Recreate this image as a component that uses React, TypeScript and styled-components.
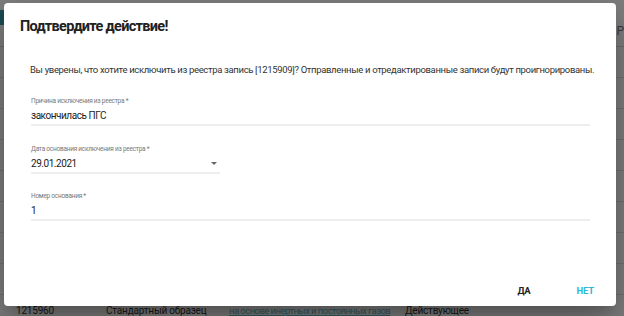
import styled, { createGlobalStyle } from 'styled-components';

const GlobalStyle = createGlobalStyle`
  html, body {
    margin: 0;
    padding: 0;
    width: 624px;
    height: 316px;
    overflow: hidden;
    font-family: 'Roboto', 'Liberation Sans', sans-serif;
    background: #ffffff;
  }
`;

const Page = styled.div`
  position: relative;
  width: 624px;
  height: 316px;
  overflow: hidden;
  background: #ffffff;
`;

const Header = styled.div`
  display: flex;
  justify-content: space-between;
  align-items: flex-start;
  height: 47px;
  box-sizing: border-box;
  padding-top: 10px;
  border-bottom: 1px solid #d8d8d8;
`;

const TealTab = styled.div`
  width: 60px;
  height: 15px;
  background: #3a9aa8;
`;

const HeaderText = styled.span`
  margin-top: 14px;
  font-size: 12px;
  color: #777;
`;

const Row = styled.div`
  display: grid;
  grid-template-columns: 90px 123px 176px 1fr;
  align-items: center;
  height: 30px;
  padding-left: 16px;
  border-bottom: 1px solid #e4e4e4;
  font-size: 10px;
  letter-spacing: -0.2px;
  white-space: nowrap;
  color: #333;
`;

const LinkCell = styled.span`
  font-size: 9.5px;
  letter-spacing: -0.55px;
  color: #5fb8c6;
  text-decoration: underline;
`;

const Overlay = styled.div`
  position: absolute;
  inset: 0;
  background: rgba(0, 0, 0, 0.5);
`;

const Dialog = styled.div`
  position: absolute;
  left: 4px;
  top: 3px;
  width: 612px;
  height: 303px;
  box-sizing: border-box;
  background: #ffffff;
  border-radius: 4px;
  box-shadow: 0 11px 15px -7px rgba(0, 0, 0, 0.2),
    0 24px 38px 3px rgba(0, 0, 0, 0.14), 0 9px 46px 8px rgba(0, 0, 0, 0.12);
  display: flex;
  flex-direction: column;
`;

const Title = styled.h2`
  margin: 0;
  padding: 15px 16px 0;
  font-size: 14.5px;
  line-height: 18px;
  font-weight: 700;
  letter-spacing: -0.7px;
  color: #212121;
`;

const Content = styled.div`
  flex: 1;
  padding: 0 26px 0 27px;
`;

const Message = styled.p`
  margin: 27px 0 0 -1px;
  font-size: 9.5px;
  line-height: 13px;
  letter-spacing: -0.34px;
  white-space: nowrap;
  color: #333333;
`;

const Field = styled.div<{ $width?: number; $gap: number }>`
  display: flex;
  flex-direction: column;
  width: ${p => (p.$width ? `${p.$width}px` : '100%')};
  margin-top: ${p => p.$gap}px;
  border-bottom: 2px solid #eeeeee;
`;

const Label = styled.label`
  font-size: 6.5px;
  line-height: 9px;
  letter-spacing: -0.25px;
  color: #777777;
`;

const Value = styled.div`
  display: flex;
  justify-content: space-between;
  align-items: center;
  font-size: 10px;
  line-height: 13px;
  letter-spacing: -0.45px;
  color: #222222;
  padding: 3px 0 2px;
`;

const Arrow = styled.span`
  width: 0;
  height: 0;
  margin-right: 3px;
  border-left: 3.5px solid transparent;
  border-right: 3.5px solid transparent;
  border-top: 3.5px solid #666;
`;

const Actions = styled.div`
  display: flex;
  justify-content: flex-end;
  gap: 46px;
  padding: 0 22px 10px 0;
`;

const Action = styled.button<{ $primary?: boolean }>`
  border: 0;
  background: none;
  padding: 0;
  font-family: inherit;
  font-size: 9.5px;
  font-weight: 700;
  letter-spacing: -0.2px;
  color: ${p => (p.$primary ? '#2fb8d8' : '#222222')};
`;

export default function App() {
  return (
    <Page>
      <GlobalStyle />
      <Header>
        <TealTab />
        <HeaderText>Р</HeaderText>
      </Header>
      <Row />
      <Row />
      <Row />
      <Row />
      <Row />
      <Row />
      <Row />
      <Row />
      <Row>
        <span>1215960</span>
        <span>Стандартный образец</span>
        <LinkCell>на основе инертных и постоянных газов</LinkCell>
        <span>Действующее</span>
      </Row>
      <Overlay />
      <Dialog>
        <Title>Подтвердите действие!</Title>
        <Content>
          <Message>
            Вы уверены, что хотите исключить из реестра запись [1215909]? Отправленные и
            отредактированные записи будут проигнорированы.
          </Message>
          <Field $gap={21}>
            <Label>Причина исключения из реестра *</Label>
            <Value>закончилась ПГС</Value>
          </Field>
          <Field $width={189} $gap={19}>
            <Label>Дата основания исключения из реестра *</Label>
            <Value>
              29.01.2021
              <Arrow />
            </Value>
          </Field>
          <Field $gap={18}>
            <Label>Номер основания *</Label>
            <Value>1</Value>
          </Field>
        </Content>
        <Actions>
          <Action>ДА</Action>
          <Action $primary>НЕТ</Action>
        </Actions>
      </Dialog>
    </Page>
  );
}
